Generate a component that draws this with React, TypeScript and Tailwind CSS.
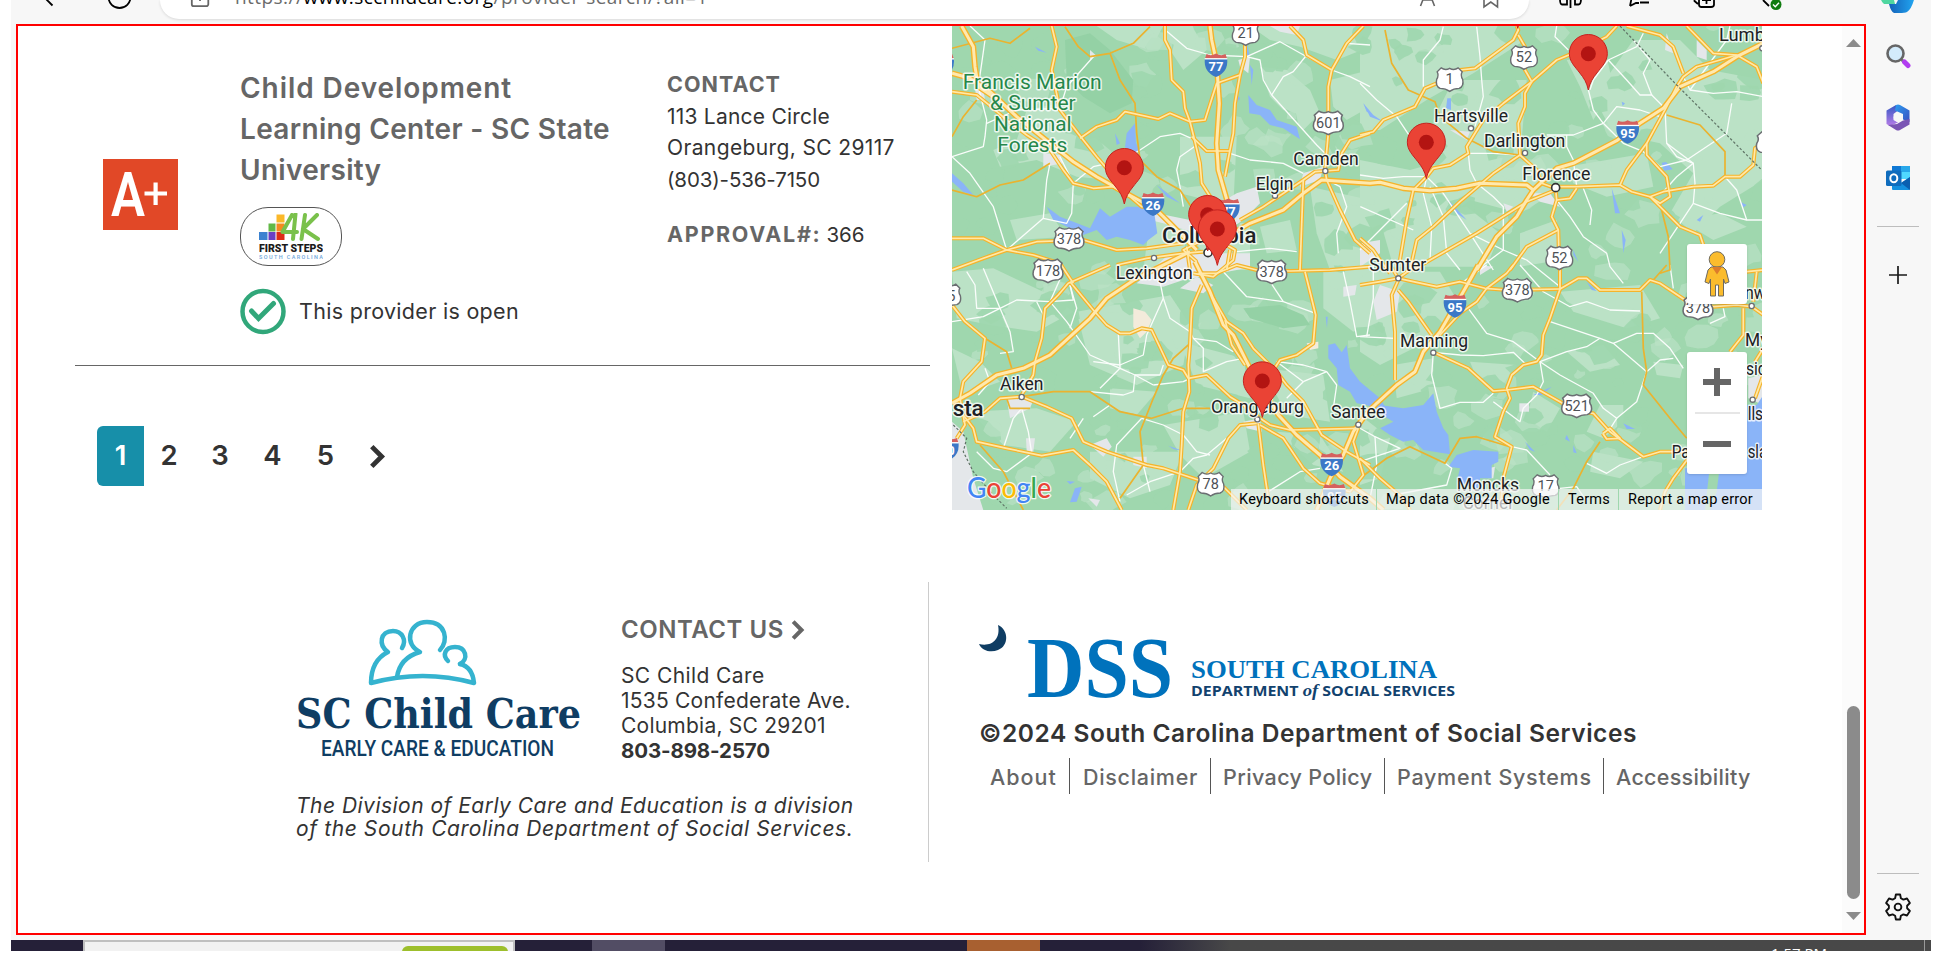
import React from "react";

type Tile = "A" | "B" | "C" | "D";
const ORIGIN: Record<Tile, [number, number]> = { A: [950, 20], B: [1360, 20], C: [950, 265], D: [1360, 265] };
const pt = (t: Tile, x: number, y: number): [number, number] => [ORIGIN[t][0] + x / 3, ORIGIN[t][1] + y / 3];
const pts = (t: Tile, s: string) =>
  s.split(" ").map((p) => { const [x, y] = p.split(",").map(Number); return pt(t, x, y).map((n) => n.toFixed(1)).join(","); }).join(" ");

const highways: [Tile, string][] = [
  ["A", "6,160 60,175 120,215 200,290 300,370 370,425 440,470 520,515 575,545 620,570 660,610 700,650 740,690"],
  ["A", "35,18 70,80 75,140 85,200 130,230"],
  ["A", "780,18 785,60 800,130 808,250 800,370 805,450 825,520 845,590 850,650"],
  ["A", "830,650 900,610 1000,570 1060,520 1115,480 1260,490 1290,487 1360,505 1440,512 1520,505 1590,490 1730,495 1750,510"],
  ["B", "350,750 410,650 470,590 500,540 520,510 590,445 640,430 770,362 840,310 910,265 960,200 1060,155 1130,110 1210,70"],
  ["C", "720,-40 620,10 560,40 470,100 420,160 300,270 220,310 140,330 60,385 6,415"],
  ["C", "735,-10 780,80 820,180 850,210 890,290 910,330 985,450 1040,510 1110,570 1170,635 1260,700 1300,735"],
  ["D", "355,0 310,80 240,200 190,260 165,320 110,360 50,415 20,445 -20,500 -50,570 -90,640 -130,735"],
];
const mains: [Tile, string][] = [
  ["A", "305,18 320,80 305,150 330,270 400,360 440,410 500,480"],
  ["A", "645,18 645,60 660,90 665,180 700,215 705,265 720,305 735,365 750,430 755,490 800,560"],
  ["A", "6,215 80,225 130,265 170,300 230,345 300,390 340,450 370,490 430,505 490,500 540,530 575,560 600,560"],
  ["A", "390,355 440,320 500,300 525,275 625,297 660,280 720,305 765,300 800,190 870,165 885,110 885,60"],
  ["A", "870,165 855,250 850,340 838,400 825,470"],
  ["A", "725,350 770,393 840,393"],
  ["A", "1020,18 1060,60 1070,105 1145,150 1135,200 1135,340 1125,450"],
  ["A", "1145,150 1190,70 1240,18"],
  ["A", "1260,340 1200,360 1175,400 1165,450 1095,455 1060,480 940,560 870,600"],
  ["A", "1060,480 1050,750"],
  ["A", "1125,450 1130,480 1170,570 1215,660 1260,700"],
  ["A", "6,655 100,655 170,690 260,665 400,660 500,690 590,685 700,670"],
  ["A", "6,750 100,715 170,690 250,705 330,730 370,790"],
  ["A", "500,735 590,715 700,700 760,695"],
  ["A", "740,725 700,690 750,665 820,670 855,690 850,720 790,770 730,760"],
  ["A", "710,680 720,750"], ["A", "840,690 830,750"],
  ["B", "0,345 40,335 70,300 165,260 195,205 230,190 300,150 345,145 460,60 475,30 470,18"],
  ["B", "475,45 495,80 495,150 515,185 495,220 495,260 475,310 480,405"],
  ["B", "770,18 740,50 650,95 590,120 515,185 430,250 370,300 345,340 320,380 325,400 270,435 220,445 200,470"],
  ["B", "480,405 400,460 300,545 220,620 170,660 150,750"],
  ["B", "200,470 160,510 140,600 120,720"],
  ["B", "587,510 500,545 350,640 210,720 160,750"],
  ["B", "590,500 650,500 780,495 815,515 870,530 910,515 1000,500 1060,497 1095,470 1140,470 1180,435 1185,385 1210,370"],
  ["B", "780,495 800,450 860,370 920,260 950,200 970,170 1010,140 1080,120 1130,105"],
  ["B", "860,370 860,405 920,470 930,530 900,550 870,530 960,620 1020,645 1035,690"],
  ["B", "800,18 900,45 940,80 970,160"],
  ["B", "980,18 1060,100 1130,105 1190,140 1210,190"],
  ["B", "587,510 590,540 575,590 595,630 598,750"],
  ["B", "595,630 500,680 450,750"],
  ["B", "480,405 530,450 545,490 587,505"],
  ["B", "0,655 40,690 60,720 90,760"],
  ["B", "590,540 630,535 650,505"],
  ["C", "480,0 355,55 325,90 285,130 275,220 255,290 250,330 215,390"],
  ["C", "360,50 430,135 470,180 510,205 540,205 575,190 605,195 655,300 700,315 715,340 770,330 840,395 880,420 930,460"],
  ["C", "755,60 725,130 720,240 715,300 718,380 700,440 695,540 690,620 670,735"],
  ["C", "6,120 45,170 105,220 95,290 40,350 30,400 45,480 20,520"],
  ["C", "215,395 150,400 105,440 40,470"],
  ["C", "215,395 290,425 365,460 400,530 470,560 590,600 640,610 745,645"],
  ["C", "40,450 70,490 80,530 170,550 275,572 370,555 420,600 470,650 515,735"],
  ["C", "790,100 830,170 880,205 910,250 980,320 1010,360 1060,410 1115,510 1190,560 1260,600"],
  ["C", "825,165 845,240 885,300"],
  ["C", "1065,20 1080,80 1097,150 1090,235 1040,270 990,285 960,330 935,440"],
  ["C", "930,460 960,480 1020,495 1225,490"],
  ["C", "920,475 870,480 835,520 790,610 740,660 715,735"],
  ["C", "925,475 940,600 955,700"],
  ["C", "930,480 1000,520 1060,610 1110,655 1200,680"],
  ["C", "1225,490 1210,530 1240,630 1200,680"],
  ["C", "820,665 890,735"],
  ["C", "745,25 800,25 860,0 920,15 1020,18 1140,15 1260,5"],
  ["D", "0,580 60,640 130,700 150,735"],
  ["D", "115,45 95,90 105,200 105,345"],
  ["D", "115,75 145,110 215,210"],
  ["D", "90,0 115,40 160,50 230,65 300,50 375,70 440,75 600,72"],
  ["D", "460,0 440,25 380,70 350,110 300,145 240,210"],
  ["D", "220,262 325,310 400,378 440,375 520,365 600,410 650,440 700,445 750,500 850,575 900,560 980,560"],
  ["D", "600,0 600,72 570,160 550,210 545,270 530,290 490,300 455,330 440,370 450,400 430,440 405,515 455,545 430,640 420,735"],
  ["D", "600,72 655,40 680,40 720,75 840,75 870,45 900,55 975,105 1060,125 1130,120 1175,125 1210,150"],
  ["D", "1150,130 1150,210 1110,260"], ["D", "1190,20 1180,110"], ["D", "1160,20 1210,15"],
  ["D", "985,580 940,640 915,680 900,735"],
  ["D", "1210,330 1185,400"], ["D", "1210,250 1185,290"],
  ["D", "730,505 750,490 780,520 740,522 728,505"],
  ["D", "0,60 60,50 115,40 170,0"],
];
const minors: [Tile, string][] = [
  ["A", "6,85 120,55 180,70 240,25"],
  ["A", "345,20 385,80 420,110 480,100 550,70 600,20"],
  ["A", "480,100 510,180 555,250 560,340 570,420 620,470 690,510 730,570"],
  ["A", "80,240 40,290 6,350"],
  ["A", "6,510 80,530 150,495 220,480 300,430"],
  ["B", "75,30 95,130 145,210 225,245 240,290 320,355 400,395 480,405"],
  ["B", "920,285 1020,315 1095,395 1095,470"],
  ["B", "900,550 925,650 930,750 900,760"],
  ["C", "105,220 170,260 185,310"],
  ["C", "215,395 310,380 420,380 510,440 605,460 700,430 780,430"],
  ["C", "720,235 670,280 640,330 610,400 570,500 580,600 510,700"],
  ["C", "90,540 160,620 220,735"],
  ["C", "170,400 180,430 240,430"],
  ["D", "845,80 850,250 860,320 850,360 930,460 980,520"],
  ["D", "0,640 80,580 150,545 255,595 300,520 350,515 450,545"],
  ["D", "720,530 680,590 640,670 590,735"],
  ["D", "920,0 880,45"],
];
const lanes: [Tile, string][] = [
  ["A", "60,18 105,60 95,130 85,200 110,300 105,350 100,380 6,410"],
  ["A", "330,410 370,490 365,580 350,610 280,595 170,690"],
  ["A", "300,430 290,480 280,595"], ["A", "110,310 200,270 330,265"], ["A", "330,265 350,200 430,110"],
  ["A", "640,25 710,85 780,105 890,110 990,65 1070,110 1145,150"],
  ["A", "890,110 930,120 940,180 965,225 1100,375 1125,400"],
  ["A", "965,225 1000,170 1030,155 1070,105"], ["A", "570,390 630,350 690,340 735,360"],
  ["A", "740,375 690,410 680,450 690,500 700,560"],
  ["A", "840,400 900,420 1000,430 1060,460"], ["A", "370,490 430,440 520,420 570,390"],
  ["A", "6,410 60,460 130,560 170,690"], ["A", "860,695 960,685 1040,695"],
  ["A", "1145,150 1200,170 1260,200"], ["A", "1130,480 1170,500 1190,560 1160,640 1165,700"], ["A", "1190,70 1260,75"],
  ["B", "250,20 240,60 190,120 190,200"], ["B", "350,20 360,110 365,180 370,230 345,320"],
  ["B", "0,190 50,240 110,290 150,350"], ["B", "590,18 585,50 625,90"],
  ["B", "685,209 700,270 730,310 790,370 850,395 900,440 980,420 1100,340 1115,250"],
  ["B", "745,120 800,180 840,225 875,225 850,160 870,120 820,60"],
  ["B", "745,120 700,180 690,209"], ["B", "745,120 830,80 850,40"],
  ["B", "875,225 915,265 920,370 950,410 1000,430 1005,490 1000,550 900,700"],
  ["B", "730,310 640,345 560,345"], ["B", "730,310 770,260 840,270 900,290"],
  ["B", "620,345 620,380 640,420 650,500"], ["B", "325,400 330,450 350,490 400,530 430,560 430,690 350,750"],
  ["B", "0,465 70,475 130,470 200,470 250,520 330,640 400,750"],
  ["B", "200,470 190,520 215,620 210,720"], ["B", "210,500 250,590 260,700 300,750"],
  ["B", "590,540 630,590 670,650 740,700 750,740 790,790"], ["B", "670,505 695,570 690,615"],
  ["B", "990,210 1060,220 1130,215 1210,230"], ["B", "970,170 990,210 1100,60 1110,18"],
  ["B", "1095,470 1130,510 1160,600 1210,600"], ["B", "1000,550 1080,580 1160,600"],
  ["B", "920,370 1000,430 950,470 910,515"], ["B", "140,550 80,610 0,690"], ["B", "330,400 400,400 480,405"],
  ["B", "160,630 1,560"], ["B", "330,640 430,690 500,720 600,800"],
  ["C", "50,20 75,60 80,130 150,130 180,200 190,260 150,265"],
  ["C", "150,130 200,105 300,110 370,105 360,60"], ["C", "150,130 100,155 6,170"], ["C", "100,10 150,130"],
  ["C", "260,110 280,150"], ["C", "300,110 350,170 420,270 510,310 555,330 610,360"],
  ["C", "360,60 380,130 360,190"], ["C", "430,290 510,300 580,270 590,210 640,100 630,50"],
  ["C", "640,100 660,160 720,200 730,220 800,230 850,260"], ["C", "505,205 510,310 450,370"],
  ["C", "555,330 550,380 520,390 420,380"], ["C", "555,330 630,330 640,300"],
  ["C", "610,360 700,350 720,340"], ["C", "730,220 760,250 760,320 830,290 880,280"],
  ["C", "215,430 190,460 160,550"], ["C", "215,430 235,500 245,565 170,620 130,610 80,560"],
  ["C", "480,420 430,455"], ["C", "575,460 500,540 490,620 510,710"], ["C", "575,460 640,480 700,510 740,560 780,570"],
  ["C", "580,600 600,680"], ["C", "690,620 730,580 770,570 830,520"], ["C", "530,690 600,650 690,620"],
  ["C", "980,290 1060,300 1130,320 1160,360 1150,430"], ["C", "1060,350 1130,320"], ["C", "1010,400 1060,350 980,290"],
  ["C", "820,20 890,95 1000,110 1097,145"], ["C", "960,50 1000,110"], ["C", "1180,20 1200,110 1220,215 1260,210"],
  ["C", "955,680 1050,620 1110,610"], ["C", "105,310 120,350 85,390"], ["C", "300,110 340,20"], ["C", "360,520 400,460"],
  ["D", "0,215 105,220"], ["D", "40,0 40,100 20,215"], ["D", "325,130 380,205 460,230 500,260 540,290"],
  ["D", "220,262 300,270 370,272 460,262 500,300"], ["D", "220,262 215,330 240,430 300,412 370,412 400,385"],
  ["D", "570,170 720,220 760,235 860,320"], ["D", "540,290 620,260 680,245 720,220"],
  ["D", "540,290 600,330 700,385 730,430 770,460 745,500"], ["D", "540,290 550,350 530,390 490,430 480,470 400,410"],
  ["D", "760,235 830,205 880,205 930,250 970,310"], ["D", "770,460 830,410 860,320 900,285 940,280"],
  ["D", "480,0 550,80 630,125 680,110 750,135 840,138"], ["D", "850,575 780,600 740,625 680,595"],
  ["D", "455,545 500,555 570,630"], ["D", "0,490 45,515 120,550 0,590"], ["D", "45,515 50,600 30,700"],
  ["D", "255,595 275,610 260,660 100,690"], ["D", "1050,175 1095,155 1090,130"],
  ["D", "600,670 650,665 680,710"], ["D", "930,0 940,70"], ["D", "380,0 310,50"],
];
const lakes: [Tile, string][] = [
  ["A", "290,560 330,590 370,605 420,625 450,565 480,590 530,560 610,560 622,640 595,660 580,675 540,660 500,650 470,660 440,630 400,645 340,615 310,600"],
  ["A", "530,340 555,310 558,370 570,390 540,405 525,380"], ["A", "895,225 920,255 960,270 980,300 1040,320 1050,358 1000,325 960,315 930,285 898,280"],
  ["A", "6,460 40,490 70,525 40,515 6,485"], ["A", "255,80 290,98 265,92"], ["A", "890,70 900,110 885,100"], ["A", "900,135 910,150 905,195"],
  ["A", "620,495 690,550 650,530"], ["A", "1240,250 1260,280 1250,275"], ["A", "860,225 870,235 862,245"], ["A", "495,340 510,370 500,375"],
  ["B", "262,235 273,235 273,270 258,265"], ["B", "10,250 40,285 70,305 30,290"], ["B", "265,540 320,600 290,580"],
  ["B", "905,428 918,426 938,448 912,452"], ["B", "785,245 795,250 788,258"], ["B", "755,505 780,580 765,580"],
  ["B", "785,630 797,660 790,700"], ["B", "1010,600 1030,585 1020,605"], ["B", "1140,545 1160,555 1150,562"], ["B", "640,690 655,725 640,705"],
  ["C", "1135,240 1155,235 1175,262 1190,240 1200,310 1230,350 1290,400 1320,450 1250,420 1220,415 1200,380 1165,360 1160,310 1135,280"],
  ["D", "0,350 40,390 60,420 130,430 190,420 220,385 230,440 250,490 265,510 270,568 190,555 160,525 130,530 90,510 60,490 100,470 50,440 0,400"],
  ["D", "290,570 340,555 415,560 415,590 395,600 395,640 360,640 360,672 290,650 300,610 265,605"],
  ["D", "975,610 1210,610 1210,735 975,735"], ["D", "1160,420 1190,420 1210,390 1210,640 1130,640"],
  ["D", "790,475 825,492 800,492"], ["D", "620,510 630,530 615,522"], ["D", "640,540 650,565 640,562"], ["D", "495,530 525,560 510,555"],
  ["C", "375,670 395,665 380,710 360,712"], ["C", "350,648 375,650 360,658"], ["C", "655,542 700,558 670,552"], ["C", "1127,155 1133,155 1131,190"],
  ["D", "520,390 575,365 545,390"], ["D", "680,50 710,78 695,75"],
];
const towns: [Tile, string][] = [
  ["A", "860,520 920,500 930,550 880,600 820,640 740,640 640,610 600,600 620,580 720,600"],
  ["A", "1060,460 1120,440 1110,480 1050,500"], ["A", "280,400 330,405 340,430 280,440"], ["A", "865,120 900,110 895,160 870,140"],
  ["A", "75,205 100,205 105,240 80,240"], ["A", "960,18 1050,18 1040,45 990,35"], ["A", "420,90 440,108 420,118"],
  ["A", "660,700 900,700 900,740 860,750 700,780 640,800 560,790"],
  ["B", "510,520 570,520 600,560 540,545"], ["B", "1010,60 1040,90 1040,120 1010,110"], ["B", "920,40 940,100 915,90"],
  ["B", "270,330 330,335 320,360"], ["B", "0,670 60,660 60,700 0,740"], ["B", "430,550 460,560 440,575"],
  ["C", "170,400 250,405 240,430 180,460"], ["C", "420,540 470,520 485,545 460,575"], ["C", "550,575 590,575 590,610 550,600"],
  ["C", "228,520 255,520 250,560 230,560"], ["C", "880,470 930,460 935,500 890,490"], ["C", "6,470 40,500 70,640 100,735 6,735"],
  ["C", "1180,65 1220,60 1215,90 1180,95"], ["C", "740,35 790,60 760,85 690,70"], ["C", "415,700 450,705 440,725"],
  ["D", "60,60 120,80 110,140 50,165 40,110"], ["D", "478,415 507,415 507,440 478,440"], ["D", "360,0 400,5 360,30"],
  ["D", "1165,340 1210,330 1210,420 1165,400"], ["D", "385,610 405,605 400,640 385,640"],
];
const sands: [Tile, string][] = [["C", "550,130 585,140 605,165 590,200 570,220 550,185"], ["C", "1070,235 1105,230 1105,250 1080,255"]];
const pales: [Tile, string][] = [
  ["A", "230,270 330,250 350,330 400,350 440,420 540,440 480,480 380,470 260,420 150,440 130,390 200,360"],
  ["A", "640,18 760,18 770,90 700,150 660,90"], ["A", "930,140 1010,150 1080,210 1110,280 1060,330 960,230"],
  ["A", "1140,180 1260,150 1260,260 1190,300 1150,260"], ["A", "690,350 860,350 850,560 770,540 690,520"],
  ["A", "180,600 300,580 350,650 200,660"], ["A", "600,600 900,610 900,750 580,750"],
  ["A", "930,620 1020,600 1040,690 950,700"], ["A", "1080,500 1260,540 1260,750 1140,750 1100,640"],
  ["A", "440,18 640,18 600,90 500,60"], ["A", "900,18 1260,18 1260,80 1160,120 1050,80 960,60"],
  ["B", "0,18 480,18 480,70 340,160 200,240 60,330 0,330"], ["B", "280,180 500,180 480,420 340,440 230,420 220,300"],
  ["B", "0,420 150,450 330,400 520,430 580,520 480,580 330,540 200,640 90,600 0,640"],
  ["B", "820,60 960,60 1050,150 1210,180 1210,480 1080,560 1000,640 930,580 1000,460 900,370 760,340 700,230"],
  ["B", "620,440 860,400 880,500 740,530 640,490"], ["B", "60,600 320,560 420,640 380,740 100,740"], ["B", "620,120 740,110 760,200 700,300 660,200"],
  ["B", "960,600 1080,580 1160,620 1060,660"], ["B", "480,640 590,600 600,720 480,740"],
  ["C", "380,140 660,90 720,180 700,300 560,360 420,300"], ["C", "6,20 130,10 300,90 370,140 260,200 120,180 20,160"],
  ["C", "420,560 700,560 660,660 540,700 420,640"], ["C", "690,230 880,280 900,400 740,360"],
  ["C", "940,310 1120,330 1140,470 1010,450"], ["C", "60,440 260,430 380,470 300,560 160,540"],
  ["C", "640,480 880,440 900,560 760,640 690,570"], ["C", "1120,10 1260,10 1260,180 1210,200 1120,130"],
  ["C", "980,500 1110,510 1180,620 1090,600"], ["C", "6,250 90,290 150,350 40,390"], ["C", "480,370 620,380 560,450 480,430"],
  ["D", "0,20 240,20 300,120 200,230 60,300 0,260"], ["D", "600,80 840,60 900,160 800,190 640,140"],
  ["D", "620,260 730,240 780,300 690,320"], ["D", "330,290 470,300 420,370 350,340"], ["D", "0,450 90,520 60,640 0,660"],
  ["D", "680,500 720,420 790,420 790,470 730,520"], ["D", "880,290 970,300 960,340 890,330"], ["D", "520,380 600,430 560,500 500,460"],
  ["D", "700,560 850,590 780,640 690,620"], ["D", "100,300 220,280 220,370 110,400"],
];
const speckles = (() => {
  let seed = 11;
  const r = () => { seed = (seed * 16807) % 2147483647; return seed / 2147483647; };
  return Array.from({ length: 380 }, () => {
    const cx = 952 + r() * 810, cy = 26 + r() * 484, size = 4 + r() * 11, n = 8 + Math.floor(r() * 4);
    const light = r() < 0.4;
    const p = Array.from({ length: n }, (_, i) => {
      const a = (i / n) * Math.PI * 2, d = size * (0.6 + r() * 0.55);
      return `${(cx + Math.cos(a) * d * 1.3).toFixed(1)},${(cy + Math.sin(a) * d).toFixed(1)}`;
    }).join(" ");
    return { p, light };
  });
})();

const cities: { t: Tile; x: number; y: number; w: number; s: string; size?: number; bold?: boolean; green?: boolean }[] = [
  { t: "A", x: 38, y: 206, w: 417, s: "Francis Marion", size: 20, green: true },
  { t: "A", x: 120, y: 269, w: 257, s: "& Sumter", size: 20, green: true },
  { t: "A", x: 132, y: 332, w: 233, s: "National", size: 20, green: true },
  { t: "A", x: 142, y: 395, w: 210, s: "Forests", size: 20, green: true },
  { t: "A", x: 1030, y: 432, w: 196, s: "Camden" }, { t: "A", x: 917, y: 507, w: 113, s: "Elgin" },
  { t: "A", x: 636, y: 668, w: 283, s: "Columbia", size: 21.5, bold: true },
  { t: "C", x: 497, y: 40, w: 231, s: "Lexington" }, { t: "B", x: 222, y: 304, w: 222, s: "Hartsville" },
  { t: "B", x: 372, y: 378, w: 244, s: "Darlington" }, { t: "B", x: 487, y: 478, w: 204, s: "Florence" },
  { t: "B", x: 1077, y: 62, w: 138, s: "Lumb" }, { t: "D", x: 28, y: 15, w: 171, s: "Sumter" },
  { t: "C", x: 150, y: 374, w: 130, s: "Aiken" }, { t: "C", x: 8, y: 452, w: 93, s: "sta", size: 21.5, bold: true },
  { t: "C", x: 783, y: 443, w: 279, s: "Orangeburg" }, { t: "C", x: 1143, y: 457, w: 163, s: "Santee" },
  { t: "D", x: 120, y: 243, w: 204, s: "Manning" }, { t: "D", x: 290, y: 676, w: 187, s: "Moncks" },
  { t: "D", x: 308, y: 730, w: 154, s: "Corner" }, { t: "D", x: 1155, y: 100, w: 62, s: "nw" },
  { t: "D", x: 1155, y: 242, w: 70, s: "My" }, { t: "D", x: 1158, y: 328, w: 62, s: "sid" },
  { t: "D", x: 1163, y: 462, w: 46, s: "lls" }, { t: "D", x: 935, y: 578, w: 54, s: "Pa" }, { t: "D", x: 1163, y: 578, w: 58, s: "sla" },
];
const dots: [Tile, number, number, boolean?][] = [
  ["A", 1126, 453], ["A", 975, 527], ["A", 612, 714], ["A", 774, 698, true], ["B", 333, 325], ["B", 495, 399], ["B", 587, 503, true],
  ["D", 115, 40], ["D", 220, 263], ["C", 215, 396], ["C", 922, 463], ["C", 1225, 479], ["D", 1175, 123], ["D", 1178, 404], ["B", 1207, 85],
];
const usRoutes: [Tile, number, number, string][] = [
  ["A", 887, 40, "21"], ["A", 1135, 308, "601"], ["A", 357, 657, "378"], ["C", 294, 17, "178"], ["C", 965, 20, "378"],
  ["B", 492, 112, "52"], ["B", 269, 178, "1"], ["B", 598, 713, "52"], ["B", 1234, 370, ""], ["D", 472, 75, "378"], ["D", 1014, 128, "378"],
  ["D", 650, 422, "521"], ["D", 557, 664, "17"], ["C", 782, 657, "78"], ["C", -8, 92, "25"],
];
const interstates: [Tile, number, number, string][] = [
  ["A", 798, 135, "77"], ["A", 609, 552, "26"], ["A", 835, 570, "77"], ["B", 803, 335, "95"], ["D", 285, 122, "95"],
  ["C", 1145, 598, "26"], ["C", 1153, 690, "95"], ["A", -22, 135, ""], ["C", -8, 552, "20"],
];
const pins: [Tile, number, number][] = [["B", 473, 25], ["A", 523, 552], ["A", 773, 693], ["A", 802, 736], ["B", 685, 210], ["B", 199, 476], ["C", 937, 457]];

function UsShield({ x, y, n }: { x: number; y: number; n: string }) {
  const k = n.length === 3 || n === "" ? 1.12 : 1;
  return (
    <g transform={`translate(${x} ${y})`}>
      <path transform={`scale(${k} 1)`} d="M-8.500-11.500Q-4.500-8.500 0-11Q4.500-8.500 8.500-11.500L12.500-7.500Q10.500-4 13 0Q14.500 7 9.500 9Q4 9 0 12Q-4 9-9.500 9Q-14.500 7-13 0Q-10.500-4-12.500-7.500Z" fill="#fff" stroke="#6b6e72" strokeWidth="1.400" />
      <text y="5" textAnchor="middle" fontSize="14.500" fill="#4d5156">{n}</text>
    </g>
  );
}
function Interstate({ x, y, n }: { x: number; y: number; n: string }) {
  return (
    <g transform={`translate(${x} ${y})`}>
      <path d="M-9.500-11Q-5-8.500 0-11.500Q5-8.500 9.500-11L11-6.500H-11Z" fill="#d5605e" />
      <path d="M-11.200-6H11.200Q12.500 7 0 12Q-12.500 7-11.200-6Z" fill="#3b78c7" />
      <path d="M-11.300-6.200H11.300" stroke="#fff" strokeWidth="1.300" />
      <text y="6" textAnchor="middle" fontSize="13" fontWeight="700" fill="#fff">{n}</text>
    </g>
  );
}
function Pin({ x, y }: { x: number; y: number }) {
  return (
    <g transform={`translate(${x} ${y})`}>
      <path d="M0 0C-1.500-7.500-4.500-12-8.500-17C-13.500-23.500-19-28.500-19-36.500A19 19 0 0 1 19-36.500C19-28.500 13.500-23.500 8.500-17C4.500-12 1.500-7.500 0 0Z" fill="#ea4335" stroke="#c5221f" strokeWidth="1" />
      <circle cy="-36.300" r="7.500" fill="#b31412" />
    </g>
  );
}

function MapView() {
  const lines = (l: [Tile, string][], stroke: string, w: number) =>
    l.map(([t, s], i) => <polyline key={i} points={pts(t, s)} fill="none" stroke={stroke} strokeWidth={w} strokeLinejoin="round" />);
  const areas = (l: [Tile, string][], fill: string) => l.map(([t, s], i) => <polygon key={i} points={pts(t, s)} fill={fill} />);
  return (
    <svg width="810" height="484" viewBox="952 26 810 484" className="block font-[Roboto,sans-serif]">
      <rect x="952" y="26" width="810" height="484" fill="#9fd7ae" />
      {areas(pales, "#bbe2c6")}
      {speckles.map((s, i) => <polygon key={i} points={s.p} fill={s.light ? "#bbe2c6" : "#9fd7ae"} opacity={s.light ? 0.65 : 0.9} />)}
      {areas([["A", "345,60 420,40 480,90 550,180 545,250 480,280 400,230 350,180"], ["C", "880,130 990,120 1060,150 1080,180 1000,190 900,160"]], "#94d1a5")}
      {areas(towns, "#e4e7ea")}
      {areas(sands, "#f3ebdb")}
      {areas(lakes, "#8ab4f8")}
      {areas([["D", "1050,600 1080,600 1070,680 1050,735 1035,735"]], "#9fd7ae")}
      {lines(lanes, "#fafdfb", 1.3)}
      {lines(minors, "#eab32f", 1.7)}
      {lines(mains, "#f5b32a", 4)}
      {lines(highways, "#f5b32a", 5.8)}
      {lines(mains, "#ffe9a8", 1.7)}
      {lines(highways, "#ffe9ae", 3)}
      <polyline points={pts("B", "780,18 950,195 1205,450")} fill="none" stroke="#5f7466" strokeWidth="1.200" strokeDasharray="2.500 2" />
      <polyline points={pts("C", "10,480 50,520 40,560 70,620 130,690 170,730")} fill="none" stroke="#5f7466" strokeWidth="1.200" strokeDasharray="2.500 2" />
      {interstates.map(([t, x, y, n], i) => { const [a, b] = pt(t, x, y); return <Interstate key={i} x={a} y={b} n={n} />; })}
      {usRoutes.map(([t, x, y, n], i) => { const [a, b] = pt(t, x, y); return <UsShield key={i} x={a} y={b} n={n} />; })}
      {dots.map(([t, x, y, big], i) => { const [a, b] = pt(t, x, y); return <circle key={i} cx={a} cy={b} r={big ? 4 : 2.6} fill="#fff" stroke={big ? "#333" : "#6b6e72"} strokeWidth={big ? 1.6 : 1.3} />; })}
      {cities.map((c, i) => {
        const [a, b] = pt(c.t, c.x, c.y);
        return (
          <text key={i} x={a} y={b + 0.5} fontSize={c.size ?? 18} fontWeight={c.bold ? 500 : 400} textLength={c.w / 3} lengthAdjust="spacingAndGlyphs"
            fill={c.green ? "#25874a" : "#202124"} stroke="#fff" strokeOpacity="0.8" strokeWidth="3" strokeLinejoin="round" className="[paint-order:stroke]">{c.s}</text>
        );
      })}
      {pins.map(([t, x, y], i) => { const [a, b] = pt(t, x, y); return <Pin key={i} x={a} y={b} />; })}
      <text x="967" y="498" fontSize="28" className="font-[Lato,sans-serif] [paint-order:stroke]" fontWeight="500" textLength="84" lengthAdjust="spacingAndGlyphs" stroke="#fff" strokeOpacity=".85" strokeWidth="2.500">
        <tspan fill="#4285f4">G</tspan><tspan fill="#ea4335">o</tspan><tspan fill="#fbbc04">o</tspan><tspan fill="#4285f4">g</tspan><tspan fill="#34a853">l</tspan><tspan fill="#ea4335">e</tspan>
      </text>
    </svg>
  );
}

function Chevron({ className, w }: { className: string; w: number }) {
  return <svg viewBox="0 0 16 24" width={w} className={className}><path d="M2.500 2.500L12 12L2.500 21.500" fill="none" stroke="currentColor" strokeWidth="4.600" /></svg>;
}

function Toolbar() {
  return (
    <header className="flex h-6 shrink-0 items-start overflow-hidden bg-[#f7f7f7] text-black">
      <svg width="149" height="24" viewBox="11 0 149 24" className="shrink-0" fill="none" stroke="currentColor" strokeWidth="1.800">
        <path d="M44-3L52.500 5.500" /><circle cx="119.500" cy="-3" r="11" />
      </svg>
      <div className="flex h-[19px] w-[1369px] shrink-0 items-start overflow-hidden rounded-b-[19px] bg-white shadow-[0_1px_3px_rgba(0,0,0,0.12)]">
        <svg width="75" height="19" viewBox="160 0 75 19" fill="none" stroke="#666" strokeWidth="1.800"><rect x="191.800" y="-8" width="16.500" height="14.200" rx="2" /><path d="M200-1v2" /></svg>
        <p className="-mt-[15px] whitespace-pre font-['Open_Sans',sans-serif] text-[19px] leading-6 tracking-[0.440px] text-[#6b6b6b]">https://<span className="text-black">www.scchildcare.org</span>/provider-search/?all=1</p>
        <svg width="110" height="19" viewBox="1415 0 110 19" className="ml-auto" fill="none" stroke="#666" strokeWidth="1.600">
          <path d="M1416.500 6L1423.500-12L1430.500 6M1419 0h9" /><path d="M1480-8V7L1486.800 2L1493.500 7V-8" />
        </svg>
      </div>
      <svg width="402" height="24" viewBox="1529 0 402 24" className="shrink-0" fill="none" stroke="currentColor" strokeWidth="1.800">
        <path d="M1567-4V4.500H1562Q1560 4.500 1560-1M1575-4V4.500H1578.500Q1581 4.500 1581-1M1570.500-4V8M1630 6L1632-4M1630 6L1636 3H1639M1640 2.500H1649" />
        <path d="M1694.500-1V1L1698 4M1699-8V4.500Q1699 7 1701.500 7H1711Q1714 7 1714 4.500V-8M1706.500-4V4M1702 0H1711M1763 0L1769 6" />
        <circle cx="1776" cy="4.500" r="5.500" fill="#107c10" stroke="none" /><path d="M1773 4.500L1775.300 6.800L1779 2.800" stroke="#fff" strokeWidth="1.400" />
        <defs><linearGradient id="cp" x1="0" y1="0" x2="1" y2="0"><stop stopColor="#1461b8" /><stop offset="1" stopColor="#22a7f2" /></linearGradient></defs>
        <path d="M1880-4H1893L1895 4H1884Q1881 2 1880-4Z" fill="#4fd6a0" stroke="none" />
        <path d="M1889 4H1896L1900-4H1915Q1912 9 1907 12Q1905 13 1899 13H1894Q1891 12 1889 4Z" fill="url(#cp)" stroke="none" />
      </svg>
    </header>
  );
}

function Sidebar() {
  return (
    <aside className="flex w-[65px] shrink-0 flex-col items-center bg-[#f7f7f7] pr-[2px]">
      <svg width="26" height="26" viewBox="0 0 26 26" className="mt-[19px]">
        <path d="M16.500 16.500L19 19" stroke="#777" strokeWidth="3" /><path d="M19.500 19L23 22.500" stroke="#b13df0" strokeWidth="5" strokeLinecap="round" />
        <circle cx="10.500" cy="10.500" r="8" fill="#d3ebfb" stroke="#666" strokeWidth="2.600" />
      </svg>
      <svg width="26" height="28" viewBox="0 0 26 28" className="mt-[35px]">
        <defs>
          <linearGradient id="m1" x1="0" y1="0" x2="0" y2="1"><stop stopColor="#3558c4" /><stop offset="1" stopColor="#b77de8" /></linearGradient>
          <linearGradient id="m2" x1="0" y1="0" x2="1" y2="1"><stop stopColor="#2b9df0" /><stop offset="1" stopColor="#3a4fc0" /></linearGradient>
        </defs>
        <path d="M11 1L1.500 6.500V20L5 22L13 18.500L8.500 16V10L13 6.500Z" fill="url(#m1)" />
        <path d="M11 1Q13 0 15 1L24.500 6.500V18L18 15.500V10L10 6.500Z" fill="url(#m2)" />
        <path d="M24.500 15V20.500L15 26Q13 27 11 26L3 21L12 20L18 16.500Z" fill="#7a55b4" />
        <circle cx="13" cy="13.500" r="4.400" fill="#f7f7f7" />
      </svg>
      <svg width="26" height="26" viewBox="0 0 26 26" className="mt-[33px]">
        <path d="M7 1H25V14H7Z" fill="#28a8ea" /><path d="M7 1H16V7H7Z" fill="#0f78d4" /><path d="M16 7H25V14H16Z" fill="#50d9ff" />
        <path d="M7 12L16 18L25 12V24Q25 25 24 25H8Q7 25 7 24Z" fill="#1490df" /><path d="M16 18L25 25V12Z" fill="#0a5fb0" />
        <rect x="1" y="5.500" width="15.500" height="15.500" rx="1.500" fill="#0f6cbd" /><ellipse cx="8.800" cy="13.200" rx="3.500" ry="4" fill="none" stroke="#fff" strokeWidth="2" />
      </svg>
      <div className="mt-[35px] h-px w-[42px] bg-[#bdbdbd]" />
      <svg width="20" height="20" viewBox="0 0 20 20" className="mt-[38px]"><path d="M10 1V19M1 10H19" stroke="#1a1a1a" strokeWidth="1.700" /></svg>
      <div className="mt-auto h-px w-[42px] bg-[#bdbdbd]" />
      <svg width="30" height="30" viewBox="0 0 24 24" className="mb-[18px] mt-[18px]" fill="none" stroke="#111" strokeWidth="1.500" strokeLinejoin="round">
        <path d="M10.300 2H13.700L14.300 5L16.300 6.100L19.200 5.200L21.500 8.800L19.300 11V13L21.500 15.200L19.200 18.800L16.300 17.900L14.300 19L13.700 22H10.300L9.700 19L7.700 17.900L4.800 18.800L2.500 15.200L4.700 13V11L2.500 8.800L4.800 5.200L7.700 6.100L9.700 5Z" /><circle cx="12" cy="12" r="2.700" />
      </svg>
    </aside>
  );
}

function Provider() {
  return (
    <section className="ml-[57px] flex h-[340px] w-[855px] items-start border-b border-[#666] pl-7">
      <div className="mt-[133px] h-[71px] w-[75px] bg-[#e14827]">
        <svg width="75" height="71" viewBox="0 0 75 71" className="font-[Roboto,sans-serif]" fill="#fff">
          <text x="8" y="57" fontSize="62" fontWeight="600" textLength="34" lengthAdjust="spacingAndGlyphs">A</text>
          <path d="M41.500 32.500H64V36.500H41.500ZM50.500 23.500H54.700V46H50.500Z" />
        </svg>
      </div>
      <div className="ml-[62px] w-[427px] pt-[42px]">
        <h2 className="whitespace-nowrap text-[28px] font-semibold leading-[41px] text-[#666]">
          <span className="tracking-[0.930px]">Child Development</span><br /><span className="tracking-[0.330px]">Learning Center - SC State</span><br /><span className="tracking-[0.300px]">University</span>
        </h2>
        <div className="mt-4 flex h-[59px] w-[102px] items-center justify-center rounded-[28px] border border-[#555]">
          <svg width="64" height="48" viewBox="0 0 64 48" className="font-[Roboto,sans-serif]">
            <path d="M0 19h8.500v8H0Z" fill="#3b82d0" /><path d="M9.500 10.500h7v8h-7Z" fill="#62b946" /><path d="M9.500 19h7v8h-7Z" fill="#6a3fc4" />
            <path d="M17.500 1.500h8v8h-8Z" fill="#fbb829" /><path d="M17.500 10.500h8v8h-8Z" fill="#f58a1f" /><path d="M17.500 19h8v8h-8Z" fill="#dd2c16" />
            <path d="M33 2L23.500 19H38M36.500 1L34 26M46 2L42.500 26M58 2L44 16L59 26" fill="none" stroke="#7ac14b" strokeWidth="4" strokeLinecap="round" strokeLinejoin="round" />
            <text x="0" y="38.500" fontSize="11.500" fontWeight="900" fill="#1a1a1a" textLength="64" lengthAdjust="spacingAndGlyphs">FIRST STEPS</text>
            <text x="0" y="46" fontSize="5.500" fontWeight="500" fill="#6fa8dc" textLength="64" lengthAdjust="spacing">SOUTH CAROLINA</text>
          </svg>
        </div>
        <div className="mt-[22px] flex items-center gap-[13px] text-[21.500px] text-[#333]">
          <svg width="46" height="47" viewBox="0 0 46 47" fill="none" stroke="#31a77a"><circle cx="23" cy="23.500" r="20.500" strokeWidth="4.500" /><path d="M11.500 23L18.500 30.500L33.500 15.500" strokeWidth="5" strokeLinecap="round" /></svg>
          <span className="tracking-[0.300px]">This provider is open</span>
        </div>
      </div>
      <div className="whitespace-nowrap pt-[43px] text-[21px] leading-[31.500px] text-[#333]">
        <p className="text-[21.500px] font-bold tracking-[1.040px] text-[#666]">CONTACT</p>
        <p className="tracking-[0.220px]">113 Lance Circle</p>
        <p className="tracking-[0.370px]">Orangeburg, SC 29117</p>
        <p className="text-[20.500px] tracking-[-0.130px]">(803)-536-7150</p>
        <p className="mt-6 flex gap-[5px]"><b className="text-[21.500px] font-bold tracking-[1.700px] text-[#666]">APPROVAL#:</b><span className="text-[20.500px]">366</span></p>
      </div>
    </section>
  );
}

function Footer() {
  return (
    <footer className="mt-[72px] flex h-[280px] text-[#333]">
      <div className="w-[911px] border-r border-[#ccc] pl-[278px] pt-9">
        <div className="flex">
          <svg width="286" height="140" viewBox="296 618 286 140">
            <g fill="none" stroke="#35b3cf" strokeWidth="4.500" strokeLinecap="round" strokeLinejoin="round">
              <path d="M402 648C407 640 402 631 393 631C380 631 378 645 388 652C376 658 371 668 371 683Q423 669 474 683C473 673 469 666 460 664" />
              <path d="M440 650C449 641 446 622 427 622C408 622 404 645 420 652C406 656 399 664 397 677" />
              <path d="M448 661C442 655 445 647 455 647C466 647 469 659 460 664" />
            </g>
            <text x="296" y="728" fontSize="41" fontWeight="700" fill="#0f3d63" textLength="285" lengthAdjust="spacingAndGlyphs" className="font-['DejaVu_Serif',serif]">SC Child Care</text>
            <text x="321" y="756" fontSize="22.500" fontWeight="500" fill="#0f3d63" textLength="233" lengthAdjust="spacingAndGlyphs" className="font-[Roboto,sans-serif]">EARLY CARE &amp; EDUCATION</text>
          </svg>
          <div className="ml-[39px] whitespace-nowrap text-[21px] leading-[25px]">
            <h3 className="flex items-center gap-[7px] text-[24px] font-semibold leading-[24px] tracking-[0.550px] text-[#666]">CONTACT US<Chevron w={14} className="h-[22px]" /></h3>
            <p className="mt-[21px] tracking-[0.400px]">SC Child Care</p>
            <p className="tracking-[0.220px]">1535 Confederate Ave.</p>
            <p className="tracking-[0.230px]">Columbia, SC 29201</p>
            <p className="text-[20.500px] font-bold tracking-[-0.130px]">803-898-2570</p>
          </div>
        </div>
        <p className="mt-[31px] whitespace-nowrap text-[21px] italic leading-[23px]"><span className="tracking-[0.480px]">The Division of Early Care and Education is a division</span><br /><span className="tracking-[0.600px]">of the South Carolina Department of Social Services.</span></p>
      </div>
      <div className="whitespace-nowrap pl-[50px] pt-[40px]">
        <svg width="480" height="80" viewBox="979 622 480 80" className="block">
          <path d="M998 625C1009 630 1009 646 998 650C991 653 982 651 979 644C991 647 1001 640 998 625Z" fill="#0f3d63" />
          <text x="1027" y="697" fontSize="86" fontWeight="700" fill="#0072bc" textLength="146" lengthAdjust="spacingAndGlyphs" className="font-['Liberation_Serif',serif]">DSS</text>
          <text x="1191" y="678" fontSize="26" fontWeight="700" fill="#0072bc" textLength="246" lengthAdjust="spacingAndGlyphs" className="font-['Liberation_Serif',serif]">SOUTH CAROLINA</text>
          <text x="1191" y="695.500" fontSize="14.500" fontWeight="700" fill="#12426e" textLength="264" lengthAdjust="spacingAndGlyphs" className="font-['Open_Sans',sans-serif]">DEPARTMENT <tspan fontStyle="italic" fontSize="17" className="font-['Liberation_Serif',serif]">of</tspan> SOCIAL SERVICES</text>
        </svg>
        <p className="mt-[15px] text-[24.500px] font-semibold leading-[32px] tracking-[0.550px]">©2024 South Carolina Department of Social Services</p>
        <nav className="mt-[9px] flex h-9 divide-x divide-[#555] text-[21.500px] font-medium leading-[38px] text-[#666]">
          <a className="w-[91px] pl-[11px] tracking-[1px]">About</a><a className="w-[141px] pl-[13px] tracking-[0.700px]">Disclaimer</a><a className="w-[174px] pl-3 tracking-[0.380px]">Privacy Policy</a><a className="w-[219px] pl-3 tracking-[0.720px]">Payment Systems</a><a className="pl-3 tracking-[0.300px]">Accessibility</a>
        </nav>
      </div>
    </footer>
  );
}

function Taskbar() {
  return (
    <div className="flex h-[11px] shrink-0 overflow-hidden bg-[#252038]">
      <div className="ml-[72px] h-full w-[432px] border-x-2 border-t-2 border-[#c0c0c0] bg-[#f2f2f2] pl-[317px] pt-1"><div className="h-5 w-[106px] rounded-t-md bg-[#9dbf2c]" /></div>
      <div className="ml-[77px] w-[73px] bg-[#524d64]" />
      <div className="ml-[302px] w-[73px] bg-[#a86030]" />
      <div className="ml-[100px] flex-1 bg-linear-to-r from-[#252038] to-[#484848] to-[90px]">
        <div className="flex pl-[631px] pt-[7px] font-['Open_Sans',sans-serif] text-[15px] leading-[12px] text-white"><span className="w-[153px]">1:57 PM</span><i className="-mt-[7px] h-[11px] w-px bg-[#999]" /></div>
      </div>
    </div>
  );
}

export default function App() {
  return (
    <div className="h-[959px] w-[1942px] overflow-hidden bg-white font-[Inter,sans-serif]">
      <div className="ml-[11px] flex h-[951px] w-[1920px] flex-col bg-[#f7f7f7]">
        <Toolbar />
        <div className="flex h-[916px] shrink-0 pl-[5px]">
          <main className="flex h-[911px] w-[1850px] shrink-0 border-2 border-[#f00] bg-white">
            <div className="w-[1824px]">
              <div className="flex h-[484px]">
                <div className="w-[934px] shrink-0">
                  <Provider />
                  <nav className="ml-[79px] mt-[60px] flex h-[60px] items-center text-[27.500px] font-semibold text-[#333]">
                    <span className="flex h-full w-[47px] items-center justify-center rounded-l-md bg-[#178fa9] text-white">1</span>
                    <span className="w-[50px] text-center">2</span><span className="w-[52px] text-center">3</span><span className="w-[53px] text-center">4</span><span className="w-[53px] text-center">5</span>
                    <Chevron w={17} className="ml-[17px] h-[25px]" />
                  </nav>
                </div>
                <div className="relative h-[484px] w-[810px] shrink-0 overflow-hidden">
                  <MapView />
                  <div className="absolute right-[15px] top-[218px] flex h-[60px] w-[60px] items-center justify-center rounded-[3px] bg-white shadow">
                    <svg width="26" height="46" viewBox="0 0 26 46" stroke="#6d6a60" strokeWidth="1"><circle cx="13" cy="8.500" r="7.800" fill="#fbbc2d" /><path d="M7 16H19L22 19L25 31L21 32.500L19.500 28V45H14.500V34H11.500V45H6.500V28L5 32.500L1 31L4 19Z" fill="#fbbc2d" /><path d="M8 16H18L13 23.500Z" fill="#dd7c2b" stroke="none" /></svg>
                  </div>
                  <div className="absolute right-[15px] top-[326px] flex h-[122px] w-[60px] flex-col items-center rounded-[3px] bg-white shadow">
                    <svg width="28" height="28" viewBox="0 0 28 28" className="mt-4"><path d="M14 0V28M0 14H28" stroke="#666" strokeWidth="6" /></svg>
                    <div className="mt-4 h-[2px] w-[45px] bg-[#e6e6e6]" />
                    <div className="mt-[27px] h-[6px] w-7 bg-[#666]" />
                  </div>
                  <div className="absolute bottom-0 right-0 flex h-[21px] w-[531px] items-center divide-x divide-[#9fd7ae] whitespace-nowrap bg-[#f5f5f5]/70 font-[Roboto,sans-serif] text-[14.500px] leading-[22px] text-black">
                    <span className="w-[146px] pl-2 tracking-[0.230px]">Keyboard shortcuts</span><span className="w-[182px] pl-[9px] tracking-[0.290px]">Map data ©2024 Google</span><span className="w-[60px] pl-[9px] tracking-[0.250px]">Terms</span><span className="pl-[9px] tracking-[0.220px]">Report a map error</span>
                  </div>
                </div>
              </div>
              <Footer />
            </div>
            <div className="flex w-[22px] flex-col items-center bg-[#fbfbfb] text-[#8b8b8b]">
              <svg width="15" height="8" viewBox="0 0 15 8" className="mt-[13px]" fill="currentColor"><path d="M0 8L7.500 0L15 8Z" /></svg>
              <div className="mt-auto h-[193px] w-[13px] rounded-full bg-[#8b8b8b]" />
              <svg width="15" height="8" viewBox="0 0 15 8" className="mb-[13px] mt-[13px]" fill="currentColor"><path d="M0 0L7.500 8L15 0Z" /></svg>
            </div>
          </main>
          <Sidebar />
        </div>
        <Taskbar />
      </div>
    </div>
  );
}
